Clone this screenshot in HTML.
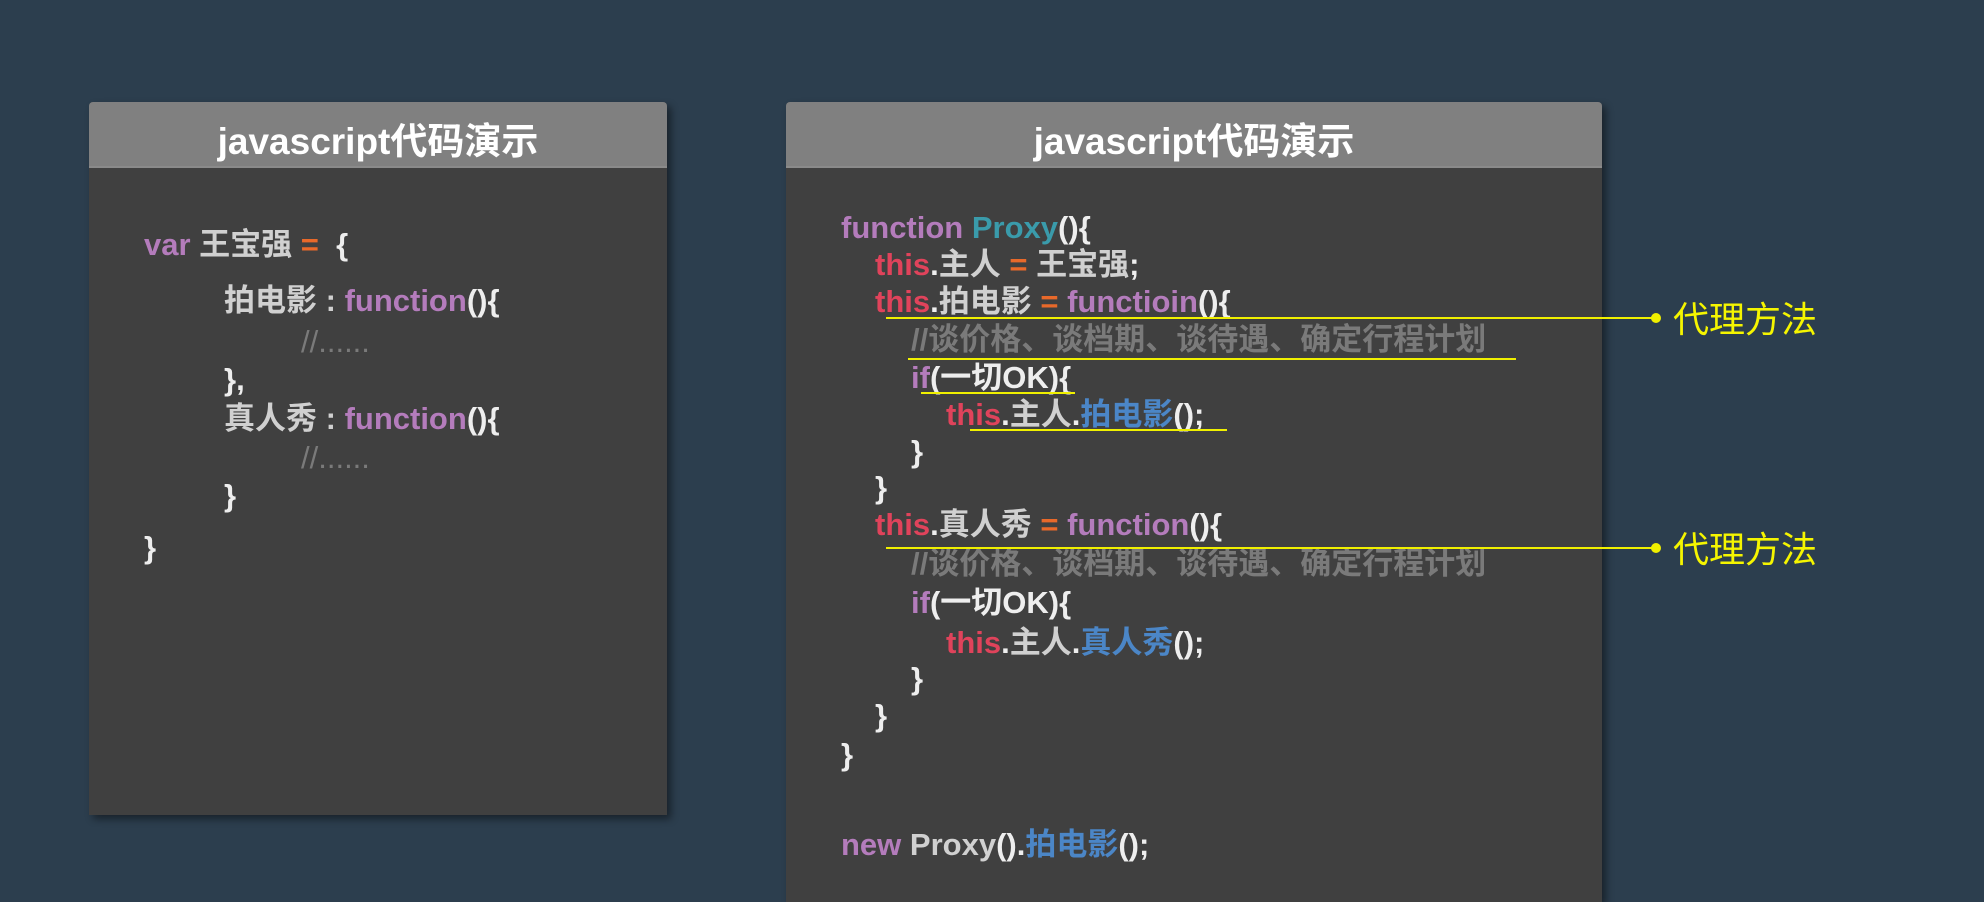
<!DOCTYPE html>
<html><head><meta charset="utf-8"><style>
*{margin:0;padding:0;box-sizing:border-box}
body{width:1984px;height:882px;background:#2c3e4e;position:relative;overflow:hidden;font-family:"Liberation Sans","Noto Sans CJK SC",sans-serif;font-weight:bold}
.panel{position:absolute;background:#404040;box-shadow:4px 4px 8px rgba(0,0,0,.45);border-radius:4px 4px 0 0;overflow:hidden}
.hd{height:66px;background:#808080;color:#fff;font-size:37px;text-align:center;line-height:80px;border-bottom:2px solid #8a8a8a;overflow:hidden}
.l{position:absolute;font-size:31px;white-space:nowrap;line-height:36px;color:#eee}
.p{color:#b47cbc}.o{color:#e8692a}.r{color:#e0435b}.t{color:#3a9bab}.b{color:#4b86c7}.c{color:#7a7a7a}.g{color:#d0d0d0}
.yl{position:absolute;height:2px;background:#f0f000}
.dot{position:absolute;width:10px;height:10px;border-radius:5px;background:#f0f000}
.lab{position:absolute;color:#f5f500;font-size:36px;font-weight:normal;line-height:40px;white-space:nowrap}
</style></head><body>
<div class="panel" style="left:89px;top:102px;width:578px;height:713px">
<div class="hd">javascript代码演示</div>
</div>
<div class="l" style="left:144px;top:227px"><span class="p">var</span> <span class="g">王宝强</span> <span class="o">=</span>&nbsp; {</div>
<div class="l" style="left:224px;top:283px"><span class="g">拍电影 :</span> <span class="p">function</span>(){</div>
<div class="l c" style="left:301px;top:324px;font-weight:normal">//......</div>
<div class="l" style="left:224px;top:362px">},</div>
<div class="l" style="left:224px;top:401px"><span class="g">真人秀 :</span> <span class="p">function</span>(){</div>
<div class="l c" style="left:301px;top:440px;font-weight:normal">//......</div>
<div class="l" style="left:224px;top:478px">}</div>
<div class="l" style="left:144px;top:530px">}</div>

<div class="panel" style="left:786px;top:102px;width:816px;height:800px">
<div class="hd">javascript代码演示</div>
</div>
<div class="l" style="left:841px;top:210px"><span class="p">function</span> <span class="t">Proxy</span>(){</div>
<div class="l" style="left:875px;top:247px"><span class="r">this</span>.<span class="g">主人</span> <span class="o">=</span> <span class="g">王宝强</span>;</div>
<div class="l" style="left:875px;top:284px"><span class="r">this</span>.<span class="g">拍电影</span> <span class="o">=</span> <span class="p">functioin</span>(){</div>
<div class="l c" style="left:911px;top:322px">//谈价格、谈档期、谈待遇、确定行程计划</div>
<div class="l" style="left:911px;top:360px"><span class="p">if</span>(一切OK){</div>
<div class="l" style="left:946px;top:397px"><span class="r">this</span>.<span class="g">主人</span>.<span class="b">拍电影</span>();</div>
<div class="l" style="left:911px;top:434px">}</div>
<div class="l" style="left:875px;top:470px">}</div>
<div class="l" style="left:875px;top:507px"><span class="r">this</span>.<span class="g">真人秀</span> <span class="o">=</span> <span class="p">function</span>(){</div>
<div class="l c" style="left:911px;top:546px">//谈价格、谈档期、谈待遇、确定行程计划</div>
<div class="l" style="left:911px;top:585px"><span class="p">if</span>(一切OK){</div>
<div class="l" style="left:946px;top:625px"><span class="r">this</span>.<span class="g">主人</span>.<span class="b">真人秀</span>();</div>
<div class="l" style="left:911px;top:661px">}</div>
<div class="l" style="left:875px;top:698px">}</div>
<div class="l" style="left:841px;top:737px">}</div>
<div class="l" style="left:841px;top:827px"><span class="p">new</span> <span class="g">Proxy</span>().<span class="b">拍电影</span>();</div>

<div class="yl" style="left:886px;top:317px;width:770px"></div>
<div class="dot" style="left:1651px;top:313px"></div>
<div class="lab" style="left:1673px;top:300px">代理方法</div>
<div class="yl" style="left:908px;top:358px;width:608px"></div>
<div class="yl" style="left:921px;top:392px;width:154px"></div>
<div class="yl" style="left:970px;top:429px;width:257px"></div>
<div class="yl" style="left:886px;top:547px;width:770px"></div>
<div class="dot" style="left:1651px;top:543px"></div>
<div class="lab" style="left:1673px;top:530px">代理方法</div>
</body></html>
